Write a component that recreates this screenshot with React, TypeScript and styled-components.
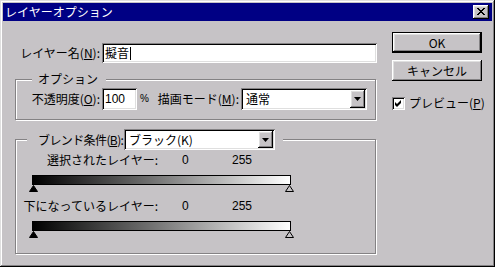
import React from "react";
import styled, { createGlobalStyle } from "styled-components";

const FACE = "#c6c3c6";
const SHADOW = "#848284";
const LIGHT = "#dfdfdf";

const GlobalStyle = createGlobalStyle`
  html, body { margin: 0; padding: 0; background: ${FACE}; }
  body {
    font-family: "Noto Sans CJK JP", "Liberation Sans", sans-serif;
    font-size: 12px;
  }
`;

const Window = styled.div`
  width: 495px;
  height: 267px;
  box-sizing: border-box;
  padding: 3px;
  background: ${FACE};
  color: #000;
  line-height: 14px;
  box-shadow: inset -1px -1px #000, inset 1px 1px ${LIGHT},
    inset -2px -2px ${SHADOW}, inset 2px 2px #fff;
`;

const TitleBar = styled.div`
  height: 18px;
  background: #000084;
  color: #fff;
  display: flex;
  align-items: center;
  justify-content: space-between;
  padding: 0 3px 0 2px;
`;

const raised = `
  background: ${FACE};
  box-shadow: inset -1px -1px #000, inset 1px 1px #fff,
    inset -2px -2px ${SHADOW}, inset 2px 2px ${LIGHT};
`;

const sunken = `
  background: #fff;
  box-shadow: inset 1px 1px ${SHADOW}, inset -1px -1px #fff,
    inset 2px 2px #000, inset -2px -2px ${LIGHT};
`;

const CloseButton = styled.div`
  width: 16px;
  height: 14px;
  ${raised}
  display: flex;
  align-items: center;
  justify-content: center;
  padding-bottom: 1px;
  box-sizing: border-box;
`;

const Body = styled.div`
  display: flex;
  padding: 11px 0 0 12px;
`;

const LeftColumn = styled.div`
  width: 362px;
  padding-top: 11px;
`;

const RightColumn = styled.div`
  width: 90px;
  margin-left: 15px;
  display: flex;
  flex-direction: column;
`;

const Row = styled.div`
  display: flex;
  align-items: center;
`;

const Label = styled.span<{ $w: number; $tight?: boolean }>`
  width: ${(p) => p.$w}px;
  text-align: ${(p) => (p.$tight ? "left" : "right")};
  letter-spacing: ${(p) => (p.$tight ? "-0.6px" : "0")};
  margin-right: 2px;
  white-space: nowrap;
`;

const TextBox = styled.div<{ $w: number; $h: number }>`
  width: ${(p) => p.$w}px;
  height: ${(p) => p.$h}px;
  ${sunken}
  box-sizing: border-box;
  padding: 3px 0 0 3px;
  white-space: nowrap;
`;

const Caret = styled.span`
  display: inline-block;
  width: 1px;
  height: 13px;
  background: #000;
  vertical-align: -2px;
  margin-left: 1px;
`;

const Group = styled.fieldset<{ $mt: number; $pb: number }>`
  width: 361px;
  box-sizing: border-box;
  margin: ${(p) => p.$mt}px 0 0;
  padding: 2px 0 ${(p) => p.$pb}px;
  border: 1px solid ${SHADOW};
  box-shadow: inset 1px 1px #fff, 1px 1px #fff;
  min-width: 0;
`;

const Legend = styled.legend<{ $ml: number; $pl: number; $pr: number }>`
  margin-left: ${(p) => p.$ml}px;
  padding: 0 ${(p) => p.$pr}px 0 ${(p) => p.$pl}px;
  background: ${FACE};
  line-height: 14px;
  display: flex;
  align-items: center;
`;

const Percent = styled.span`
  width: 10px;
  margin-left: 3px;
  font-family: "Liberation Sans", sans-serif;
  font-size: 10px;
`;

const Combo = styled.div<{ $w: number; $h: number }>`
  width: ${(p) => p.$w}px;
  height: ${(p) => p.$h}px;
  ${sunken}
  box-sizing: border-box;
  padding: 2px;
  display: flex;
  align-items: center;
`;

const ComboText = styled.span`
  flex: 1;
  padding-left: 3px;
  white-space: nowrap;
`;

const ComboButton = styled.div`
  width: 15px;
  align-self: stretch;
  ${raised}
  display: flex;
  align-items: center;
  justify-content: center;
`;

const ValueRow = styled.div<{ $mt: number }>`
  display: flex;
  height: 14px;
  margin-top: ${(p) => p.$mt}px;
  white-space: nowrap;
`;

const ValueLabel = styled.span`
  width: 142px;
  text-align: right;
`;

const Value = styled.span<{ $w?: number; $ml?: number }>`
  width: ${(p) => (p.$w ? `${p.$w}px` : "auto")};
  margin-left: ${(p) => p.$ml ?? 0}px;
  font-family: "Liberation Sans", sans-serif;
`;

const Slider = styled.div`
  margin: 8px 0 0 16px;
  width: 259px;
`;

const Ramp = styled.div`
  height: 10px;
  box-sizing: border-box;
  border: 1px solid #000;
  background: linear-gradient(to right, #000, #6e6e6e 45%, #fff);
`;

const Handles = styled.div`
  display: flex;
  justify-content: space-between;
  height: 7px;
  margin: 0 -3px;
`;

const PushButton = styled.div<{ $default?: boolean; $mt?: number }>`
  height: 21px;
  margin-top: ${(p) => p.$mt ?? 0}px;
  box-sizing: border-box;
  display: flex;
  align-items: center;
  justify-content: center;
  background: ${FACE};
  box-shadow: ${(p) =>
    p.$default
      ? `inset 0 0 0 1px #000, inset -2px -2px #000, inset 2px 2px #fff, inset -3px -3px ${SHADOW}, inset 3px 3px ${LIGHT}`
      : `inset -1px -1px #000, inset 1px 1px #fff, inset -2px -2px ${SHADOW}, inset 2px 2px ${LIGHT}`};
`;

const CheckRow = styled.label`
  display: flex;
  align-items: center;
  margin-top: 15px;
  white-space: nowrap;
`;

const CheckBox = styled.div`
  flex: none;
  width: 13px;
  height: 13px;
  ${sunken}
  display: flex;
  align-items: center;
  justify-content: center;
  margin-right: 4px;
`;

const Triangle = ({ filled }: { filled: boolean }) => (
  <svg width="9" height="7" viewBox="0 0 9 7">
    <path
      d="M4.5 0.5 L8.5 6.5 L0.5 6.5 Z"
      fill={filled ? "#000" : FACE}
      stroke="#000"
      strokeWidth="1"
    />
  </svg>
);

const DropArrow = () => (
  <svg width="7" height="4" viewBox="0 0 7 4">
    <path d="M0 0 H7 L3.5 4 Z" fill="#000" />
  </svg>
);

const BlendSlider = () => (
  <Slider>
    <Ramp />
    <Handles>
      <Triangle filled />
      <Triangle filled={false} />
    </Handles>
  </Slider>
);

export default function App() {
  return (
    <>
      <GlobalStyle />
      <Window>
        <TitleBar>
          <span>レイヤーオプション</span>
          <CloseButton>
            <svg width="8" height="7" viewBox="0 0 8 7">
              <path
                d="M0 0h2v1h1v1h2V1h1V0h2v1H7v1H6v1H5v1h1v1h1v1h1v1H6V6H5V5H3v1H2v1H0V6h1V5h1V4h1V3H2V2H1V1H0z"
                fill="#000"
              />
            </svg>
          </CloseButton>
        </TitleBar>
        <Body>
          <LeftColumn>
            <Row>
              <Label $w={85}>
                レイヤー名(<u>N</u>):
              </Label>
              <TextBox $w={275} $h={20}>
                擬音
                <Caret />
              </TextBox>
            </Row>

            <Group $mt={9} $pb={9}>
              <Legend $ml={16} $pl={6} $pr={8}>
                オプション
              </Legend>
              <Row>
                <Label $w={84}>
                  不透明度(<u>O</u>):
                </Label>
                <TextBox $w={35} $h={22}>
                  <Value>100</Value>
                </TextBox>
                <Percent>%</Percent>
                <Label $w={89}>
                  描画モード(<u>M</u>):
                </Label>
                <Combo $w={126} $h={22}>
                  <ComboText>通常</ComboText>
                  <ComboButton>
                    <DropArrow />
                  </ComboButton>
                </Combo>
              </Row>
            </Group>

            <Group $mt={9} $pb={15}>
              <Legend $ml={11} $pl={11} $pr={8}>
                <Label $w={84} $tight>
                  ブレンド条件(<u>B</u>):
                </Label>
                <Combo $w={151} $h={21}>
                  <ComboText>ブラック(K)</ComboText>
                  <ComboButton>
                    <DropArrow />
                  </ComboButton>
                </Combo>
              </Legend>
              <ValueRow $mt={1}>
                <ValueLabel>選択されたレイヤー:</ValueLabel>
                <Value $ml={24} $w={50}>
                  0
                </Value>
                <Value>255</Value>
              </ValueRow>
              <BlendSlider />
              <ValueRow $mt={7}>
                <ValueLabel>下になっているレイヤー:</ValueLabel>
                <Value $ml={24} $w={50}>
                  0
                </Value>
                <Value>255</Value>
              </ValueRow>
              <BlendSlider />
            </Group>
          </LeftColumn>

          <RightColumn>
            <PushButton $default>OK</PushButton>
            <PushButton $mt={7}>キャンセル</PushButton>
            <CheckRow>
              <CheckBox>
                <svg width="7" height="7" viewBox="0 0 7 7">
                  <path d="M0 2 L2 4 L6 0 L6 3 L2 7 L0 5 Z" fill="#000" />
                </svg>
              </CheckBox>
              プレビュー(<u>P</u>)
            </CheckRow>
          </RightColumn>
        </Body>
      </Window>
    </>
  );
}
